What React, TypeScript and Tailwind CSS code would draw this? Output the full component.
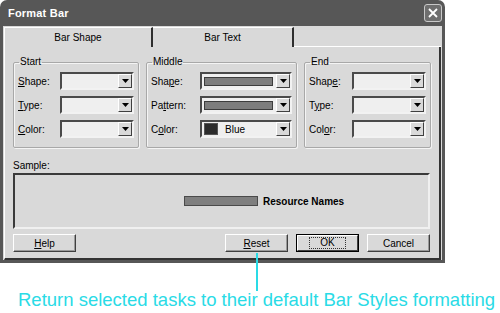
import type { ReactNode } from 'react'

function Arrow() {
  return (
    <div className="w-[14px] h-full flex items-center justify-center bg-[#d9d9d9] border border-t-white border-l-white border-r-[#404040] border-b-[#404040]">
      <svg width="7" height="4" viewBox="0 0 7 4">
        <path d="M0 0 H7 L3.5 4 Z" fill="#000" />
      </svg>
    </div>
  )
}

function Combo({ className, children }: { className: string; children?: ReactNode }) {
  return (
    <div className={`h-[18px] flex border-2 border-t-[#4a4a4a] border-l-[#4a4a4a] border-r-[#f2f2f2] border-b-[#f2f2f2] bg-[#efefef] ${className}`}>
      <div className="flex-1 flex items-center pl-[2px] pr-[3px] min-w-0">{children}</div>
      <Arrow />
    </div>
  )
}

function Row({ label, combo }: { label: ReactNode; combo: ReactNode }) {
  return (
    <div className="flex items-center justify-between">
      <span>{label}</span>
      {combo}
    </div>
  )
}

function Group({ title, className, children }: { title: string; className: string; children: ReactNode }) {
  return (
    <fieldset className={`border border-[#a8a8a8] shadow-[1px_1px_0_#f4f4f4,inset_1px_1px_0_#f4f4f4] rounded-[2px] px-[4px] pt-[4px] pb-[6px] ${className}`}>
      <legend className="px-[1px] ml-[1px] leading-[12px]">{title}</legend>
      <div className="flex flex-col gap-[6px]">{children}</div>
    </fieldset>
  )
}

function Btn({ children, focused }: { children: ReactNode; focused?: boolean }) {
  if (focused) {
    return (
      <div className="w-[63px] h-[18px] border border-black">
        <div className="w-full h-full flex items-center justify-center border border-t-white border-l-white border-r-[#404040] border-b-[#404040]">
          <div className="px-[10px] leading-[10px] outline outline-1 outline-dotted outline-[#333]">{children}</div>
        </div>
      </div>
    )
  }
  return (
    <div className="w-[63px] h-[18px] flex items-center justify-center border border-t-white border-l-white border-r-[#404040] border-b-[#404040] shadow-[inset_-1px_-1px_0_#9a9a9a]">
      {children}
    </div>
  )
}

const BarSwatch = () => <div className="w-full h-[9px] bg-[#7d7d7d] border border-[#3c3c3c]" />

export default function App() {
  return (
    <div className="w-[500px] h-[313px] bg-white relative font-['Liberation_Sans',Arial,sans-serif] text-[10px] text-black">
      <div className="w-[445px] h-[263px] flex flex-col bg-[#575757] rounded-t-[7px] px-[3px] pb-[3px]">
        <div className="h-[26px] flex items-center justify-between pl-[5px] pr-[0px]">
          <span className="text-white font-bold text-[11px] tracking-[0.2px]">Format Bar</span>
          <div className="w-[18px] h-[18px] rounded-[3px] border border-[#c8c8c8] bg-[#6e6e6e] flex items-center justify-center">
            <svg width="10" height="10" viewBox="0 0 10 10">
              <path d="M1 1 L9 9 M9 1 L1 9" stroke="#fff" strokeWidth="1.8" />
            </svg>
          </div>
        </div>
        <div className="flex-1 bg-[#d9d9d9] px-[1px] pt-[1px] flex flex-col">
          <div className="h-[20px] flex">
            <div className="w-[149px] flex items-center justify-center border-t border-l border-white border-r-2 border-r-[#2e2e2e]">Bar Shape</div>
            <div className="w-[141px] flex items-center justify-center border-t border-white border-r-2 border-r-[#2e2e2e]">Bar Text</div>
            <div className="flex-1 border-b border-white" />
          </div>
          <div className="flex-1 border-l border-white border-r-2 border-r-[#333] border-b-2 border-b-[#333] pl-[8px] pt-[9px] flex flex-col">
            <div className="flex gap-[7px] h-[92px]">
              <Group title="Start" className="w-[126px]">
                <Row label={<><u>S</u>hape:</>} combo={<Combo className="w-[74px]" />} />
                <Row label={<><u>T</u>ype:</>} combo={<Combo className="w-[74px]" />} />
                <Row label={<><u>C</u>olor:</>} combo={<Combo className="w-[74px]" />} />
              </Group>
              <Group title="Middle" className="w-[151px]">
                <Row label={<>Sha<u>p</u>e:</>} combo={<Combo className="w-[92px]"><BarSwatch /></Combo>} />
                <Row label={<>Pa<u>t</u>tern:</>} combo={<Combo className="w-[92px]"><BarSwatch /></Combo>} />
                <Row
                  label={<>C<u>o</u>lor:</>}
                  combo={
                    <Combo className="w-[92px]">
                      <div className="w-[14px] h-[12px] bg-[#2c2c2c] border border-[#555] mr-[7px]" />
                      <span>Blue</span>
                    </Combo>
                  }
                />
              </Group>
              <Group title="End" className="w-[127px]">
                <Row label={<>Shap<u>e</u>:</>} combo={<Combo className="w-[74px]" />} />
                <Row label={<>T<u>y</u>pe:</>} combo={<Combo className="w-[74px]" />} />
                <Row label={<>Col<u>o</u>r:</>} combo={<Combo className="w-[74px]" />} />
              </Group>
            </div>
            <div className="mt-[12px] leading-[12px]">Sample:</div>
            <div className="mt-[1px] w-[417px] h-[56px] border-2 border-t-[#3a3a3a] border-l-[#3a3a3a] border-r-[#f0f0f0] border-b-[#f0f0f0] flex items-center pl-[169px] gap-[5px]">
              <div className="w-[74px] h-[10px] bg-[#7f7f7f] border border-[#4a4a4a]" />
              <span className="font-bold">Resource Names</span>
            </div>
            <div className="mt-[5px] w-[417px] flex">
              <Btn><u>H</u>elp</Btn>
              <div className="flex-1" />
              <Btn><u>R</u>eset</Btn>
              <div className="w-[8px]" />
              <Btn focused>OK</Btn>
              <div className="w-[8px]" />
              <Btn>Cancel</Btn>
            </div>
          </div>
        </div>
      </div>
      <div className="absolute left-[256px] top-[253px] w-[2px] h-[38px] bg-[#2adbe6]" />
      <div className="mt-[26px] pl-[18px] text-[18.5px] leading-[21px] text-[#2adbe6] whitespace-nowrap">
        Return selected tasks to their default Bar Styles formatting
      </div>
    </div>
  )
}
